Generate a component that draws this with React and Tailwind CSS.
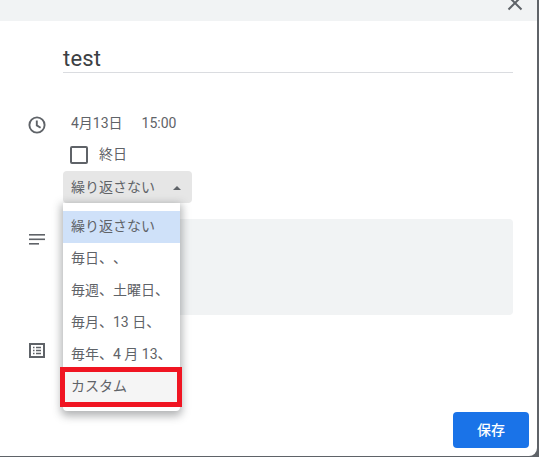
import React from "react";

function Item({ children, active, hover }) {
  return (
    <div className={`h-8 flex items-center pl-2 pb-[2px] text-[14px] [text-spacing-trim:space-all] text-[#5f6368] ${active ? "bg-[#cfe1f9]" : hover ? "bg-[#f5f5f5]" : ""}`}>
      <span className="whitespace-nowrap overflow-hidden">{children}</span>
    </div>
  );
}

export default function App() {
  return (
    <div className="w-[539px] h-[457px] bg-[#5f6368] overflow-hidden font-['Roboto','Noto_Sans_CJK_JP',sans-serif]">
      <div className="relative w-[537px] h-[456px] bg-white rounded-br-lg overflow-hidden">
        <div className="relative h-[21px] bg-[#f1f3f4]">
          <svg className="absolute left-[506px] top-[-6px]" width="18" height="18" viewBox="0 0 18 18" fill="none" stroke="#5f6368" strokeWidth="2">
            <path d="M2.5 2.5 15.5 15.5M15.5 2.5 2.5 15.5" />
          </svg>
        </div>

        <div className="ml-[63px] mr-6 mt-[22px] h-[30px] border-b border-[#dadce0] text-[22px] leading-[32px] tracking-[0.2px] text-[#3c4043]">
          test
        </div>

        <div className="flex mt-[34px]">
          <div className="w-[63px] pl-7 pt-[9px] shrink-0">
            <svg width="18" height="18" viewBox="0 0 18 18" fill="none" stroke="#5f6368" strokeWidth="1.9">
              <circle cx="9" cy="9" r="7.6" />
              <path d="M8.8 4.4V9.4L12.6 11.7" />
            </svg>
          </div>
          <div className="flex-1">
            <div className="flex pl-2 h-8 items-center text-[14px] text-[#5f6368] gap-[19px]">
              <span>4月13日</span>
              <span>15:00</span>
            </div>
            <div className="flex items-center h-[26px] mt-[3px] ml-[7px] text-[14px] text-[#5f6368]">
              <span className="w-[18px] h-[18px] border-2 border-[#5f6368] rounded-[2px]" />
              <span className="ml-[11px] pb-[2px]">終日</span>
            </div>
            <div className="flex items-center w-[129px] h-8 mt-[3px] pl-2 rounded-[4px] bg-[#e6e6e6] text-[14px] text-[#5f6368]">
              <span className="whitespace-nowrap">繰り返さない</span>
              <svg className="ml-[17px]" width="10" height="5" viewBox="0 0 10 5"><path d="M1 5 5 1 9 5Z" fill="#5f6368" /></svg>
            </div>
          </div>
        </div>

        <div className="flex mt-4">
          <div className="w-[63px] pl-[29px] pt-[15px] shrink-0">
            <svg className="block" width="16" height="11" viewBox="0 0 16 11" fill="#5f6368">
              <rect width="16" height="1.6" y="0" />
              <rect width="16" height="1.6" y="4.5" />
              <rect width="10" height="1.6" y="9" />
            </svg>
          </div>
          <div className="w-[450px] h-24 rounded-[4px] bg-[#f1f3f4]" />
        </div>

        <div className="flex mt-[28px] pl-[29px]">
          <svg width="16" height="15" viewBox="0 0 16 15" fill="none" stroke="#5f6368">
            <rect x="1" y="1" width="14" height="13" strokeWidth="2" />
            <path d="M4 4.5H5.5M4 7.5H5.5M4 10.5H5.5M7 4.5H12M7 7.5H12M7 10.5H12" strokeWidth="1.3" />
          </svg>
        </div>

        <div className="absolute left-[63px] top-[203px] w-[117px] h-[208px] py-2 bg-white rounded-b-[4px] shadow-[0_3px_8px_2px_rgba(60,64,67,0.4)]">
          <Item active>繰り返さない</Item>
          <Item>毎日、、</Item>
          <Item>毎週、土曜日、</Item>
          <Item>毎月、13 日、</Item>
          <Item>毎年、4 月 13、</Item>
          <Item hover>カスタム</Item>
        </div>
        <div className="absolute left-[60px] top-[367px] w-[122px] h-10 border-[5px] border-[#f01522]" />

        <div className="absolute left-[453px] top-[412px] w-[76px] h-9 rounded-[4px] bg-[#1a73e8] text-white text-[14px] font-medium flex items-center justify-center">
          保存
        </div>
      </div>
    </div>
  );
}
